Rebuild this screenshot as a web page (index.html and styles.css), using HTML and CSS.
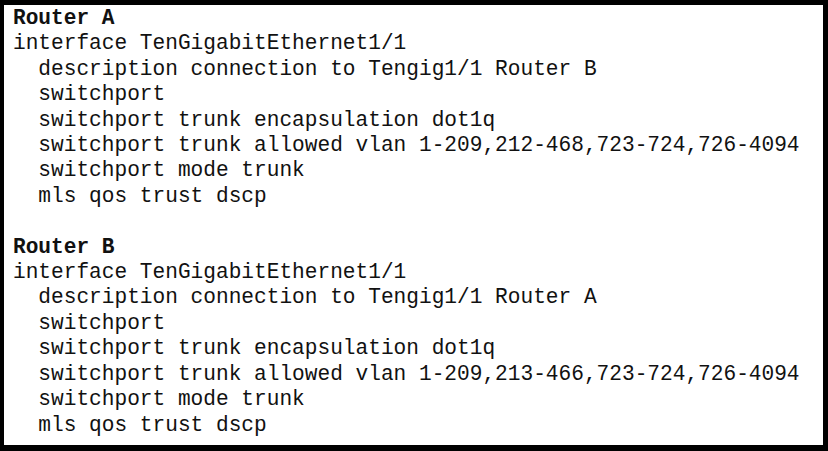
FILE: index.html
```html
<!DOCTYPE html>
<html>
<head>
<meta charset="utf-8">
<link rel="stylesheet" href="styles.css">
</head>
<body>
<div class="frame">
<pre class="config"><b class="head">Router A</b>
interface TenGigabitEthernet1/1
  description connection to Tengig1/1 Router B
  switchport
  switchport trunk encapsulation dot1q
  switchport trunk allowed vlan 1-209,212-468,723-724,726-4094
  switchport mode trunk
  mls qos trust dscp

<b class="head">Router B</b>
interface TenGigabitEthernet1/1
  description connection to Tengig1/1 Router A
  switchport
  switchport trunk encapsulation dot1q
  switchport trunk allowed vlan 1-209,213-466,723-724,726-4094
  switchport mode trunk
  mls qos trust dscp</pre>
</div>
</body>
</html>
```
FILE: styles.css
```css
html, body {
  margin: 0;
  padding: 0;
  background: #000;
}
.frame {
  box-sizing: border-box;
  width: 828px;
  height: 451px;
  background: #fff;
  border-style: solid;
  border-color: #000;
  border-width: 5px 5px 6px 4px;
  padding: 1px 0 0 9px;
  overflow: hidden;
}
.config {
  margin: 0;
  font-family: "Liberation Mono", "Courier New", monospace;
  font-size: 21.15px;
  line-height: 25.4px;
  color: #111;
  white-space: pre;
}
.head {
  font-weight: bold;
}
```
